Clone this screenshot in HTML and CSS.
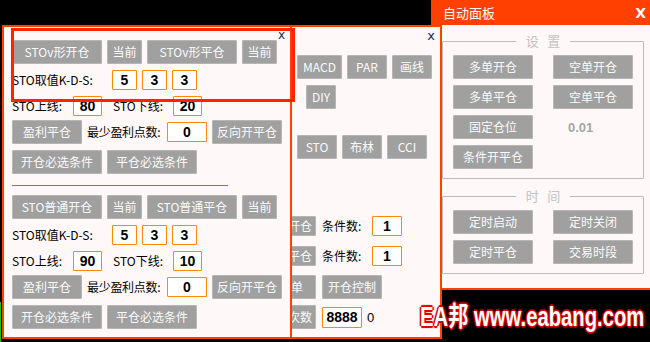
FILE: index.html
```html
<!DOCTYPE html>
<html lang="zh">
<head>
    <meta charset="utf-8">
    <title>自动面板</title>
    <link rel="stylesheet" href="styles.css">
</head>
<body>
<div class="desk">
    <div class="green-line"></div>

    <!-- right: auto panel -->
    <div class="win auto-win">
        <div class="title-bar">
            <span class="title">自动面板</span>
            <span class="title-close">X</span>
        </div>
        <div class="auto-body">
            <fieldset class="group">
                <legend>设&nbsp;&nbsp;&nbsp;置</legend>
                <div class="grid">
                    <button class="btn">多单开仓</button>
                    <button class="btn">空单开仓</button>
                    <button class="btn">多单平仓</button>
                    <button class="btn">空单平仓</button>
                    <button class="btn">固定仓位</button>
                    <span class="lots">0.01</span>
                    <button class="btn">条件开平仓</button>
                </div>
            </fieldset>
            <fieldset class="group group-time">
                <legend>时&nbsp;&nbsp;&nbsp;间</legend>
                <div class="grid">
                    <button class="btn">定时启动</button>
                    <button class="btn">定时关闭</button>
                    <button class="btn">定时平仓</button>
                    <button class="btn">交易时段</button>
                </div>
            </fieldset>
        </div>
    </div>

    <!-- middle: indicator panel -->
    <div class="win mid-win">
        <span class="close mid-close">x</span>
        <div class="mid-body">
            <div class="row ind-row row-a">
                <button class="btn w45">MACD</button>
                <button class="btn w40">PAR</button>
                <button class="btn w40">画线</button>
            </div>
            <div class="row ind-row row-b">
                <button class="btn w30">DIY</button>
            </div>
            <div class="row ind-row row-c">
                <button class="btn w40">STO</button>
                <button class="btn w40">布林</button>
                <button class="btn w40">CCI</button>
            </div>
            <div class="row cond-row row-d">
                <button class="btn w80 short">多单条件开仓</button>
                <span class="label">条件数:</span>
                <input class="num w30" value="1">
            </div>
            <div class="row cond-row row-e">
                <button class="btn w80 short">空单条件平仓</button>
                <span class="label">条件数:</span>
                <input class="num w30" value="1">
            </div>
            <div class="row cond-row row-f">
                <button class="btn w50">平单</button>
                <button class="btn w60">开仓控制</button>
            </div>
            <div class="row cond-row row-g">
                <button class="btn w80">最大开仓次数</button>
                <input class="num w40 tall" value="8888">
                <span class="count">0</span>
            </div>
        </div>
    </div>

    <!-- left: STO panel -->
    <div class="win sto-win">
        <span class="close sto-close">x</span>
        <div class="sto-body">
            <div class="section">
                <div class="row btn-row">
                    <button class="btn w90">STOv形开仓</button>
                    <button class="btn w35">当前</button>
                    <button class="btn w90">STOv形平仓</button>
                    <button class="btn w35">当前</button>
                </div>
                <div class="row field-row kds">
                    <span class="label lbl-kds">STO取值K-D-S:</span>
                    <input class="num w25" value="5">
                    <input class="num w25" value="3">
                    <input class="num w25" value="3">
                </div>
                <div class="row field-row lines">
                    <span class="label lbl-up">STO上线:</span>
                    <input class="num w29" value="80">
                    <span class="label lbl-down">STO下线:</span>
                    <input class="num w29" value="20">
                </div>
                <div class="row btn-row profit">
                    <button class="btn w70">盈利平仓</button>
                    <span class="label lbl-min">最少盈利点数:</span>
                    <input class="num w40" value="0">
                    <button class="btn w70">反向开平仓</button>
                </div>
                <div class="row btn-row must">
                    <button class="btn w90">开仓必选条件</button>
                    <button class="btn w90">平仓必选条件</button>
                </div>
            </div>

            <div class="divider"></div>

            <div class="section">
                <div class="row btn-row">
                    <button class="btn w90">STO普通开仓</button>
                    <button class="btn w35">当前</button>
                    <button class="btn w90">STO普通平仓</button>
                    <button class="btn w35">当前</button>
                </div>
                <div class="row field-row kds">
                    <span class="label lbl-kds">STO取值K-D-S:</span>
                    <input class="num w25" value="5">
                    <input class="num w25" value="3">
                    <input class="num w25" value="3">
                </div>
                <div class="row field-row lines">
                    <span class="label lbl-up">STO上线:</span>
                    <input class="num w29" value="90">
                    <span class="label lbl-down">STO下线:</span>
                    <input class="num w29" value="10">
                </div>
                <div class="row btn-row profit">
                    <button class="btn w70">盈利平仓</button>
                    <span class="label lbl-min">最少盈利点数:</span>
                    <input class="num w40" value="0">
                    <button class="btn w70">反向开平仓</button>
                </div>
                <div class="row btn-row must">
                    <button class="btn w90">开仓必选条件</button>
                    <button class="btn w90">平仓必选条件</button>
                </div>
            </div>
        </div>
        <div class="highlight"></div>
    </div>

    <div class="watermark">EA邦 www.eabang.com</div>
</div>
</body>
</html>
```

FILE: styles.css
```css
* {
    box-sizing: border-box;
}
body {
    margin: 0;
    background-color: #000;
    font-family: "Noto Sans CJK SC", "Noto Sans", sans-serif;
    font-size: 12px;
}
.desk {
    position: relative;
    width: 650px;
    height: 342px;
    overflow: hidden;
}
.green-line {
    position: absolute;
    left: 0;
    top: 302px;
    width: 1px;
    height: 40px;
    background-color: #22c022;
}

/* windows */
.win {
    position: absolute;
    background-color: #fff8f8;
}
.close {
    position: absolute;
    font-family: "DejaVu Sans", sans-serif;
    font-size: 12px;
    line-height: 12px;
    color: #14285a;
}

/* buttons and fields */
.btn {
    display: flex;
    align-items: center;
    justify-content: center;
    flex: none;
    height: 24px;
    padding: 0;
    background-color: #a0a0a0;
    border: 1px solid #b6b6b6;
    border-radius: 1px;
    color: #fbfbfb;
    font-family: "Noto Sans CJK SC", "Noto Sans", sans-serif;
    font-size: 12px;
    line-height: 1;
    white-space: nowrap;
    overflow: hidden;
}
.w25 { width: 25px; }
.w29 { width: 29px; }
.w30 { width: 30px; }
.w35 { width: 35px; }
.w40 { width: 40px; }
.w45 { width: 45px; }
.w50 { width: 50px; }
.w60 { width: 60px; }
.w70 { width: 70px; }
.w80 { width: 80px; }
.w90 { width: 90px; }
.num {
    flex: none;
    height: 20px;
    padding: 0;
    border: 1px solid #ff8a00;
    border-radius: 1px;
    background-color: #fff;
    color: #000;
    font-family: "Liberation Sans", Arial, sans-serif;
    font-size: 14px;
    font-weight: 900;
    text-align: center;
    outline: none;
}
.label {
    flex: none;
    color: #000;
    font-size: 12px;
    line-height: 1;
    white-space: nowrap;
}
.row {
    display: flex;
    align-items: center;
}

/* left STO panel */
.sto-win {
    left: 2px;
    top: 25px;
    width: 290px;
    height: 314px;
    border: 2px solid #ff4000;
    z-index: 3;
}
.sto-close {
    right: 5px;
    top: 2px;
}
.sto-body {
    padding: 13px 0 0 8px;
}
.section {
    display: flex;
    flex-direction: column;
}
.btn-row {
    gap: 5px;
    height: 24px;
}
.field-row {
    height: 20px;
}
.kds {
    margin-top: 6px;
    gap: 5px;
}
.lbl-kds {
    width: 95px;
}
.lines {
    margin-top: 6px;
}
.lbl-up {
    width: 61px;
}
.lbl-down {
    width: 60px;
    margin-left: 11px;
}
.profit {
    margin-top: 4px;
}
.lbl-min {
    width: 75px;
    letter-spacing: -0.3px;
}
.must {
    margin-top: 6px;
}
.divider {
    width: 216px;
    height: 1px;
    margin: 11px 0 9px;
    background-color: #7466e8;
}
.highlight {
    position: absolute;
    left: 7px;
    top: 1px;
    width: 284px;
    height: 74px;
    border: 3px solid #ff2400;
}

/* middle indicator panel */
.mid-win {
    left: 180px;
    top: 25px;
    width: 262px;
    height: 314px;
    border: 2px solid #ff4000;
    z-index: 2;
}
.mid-close {
    right: 5px;
    top: 3px;
    font-size: 13px;
}
.mid-body {
    display: flex;
    flex-direction: column;
    padding: 28px 0 0 54px;
}
.ind-row {
    gap: 5px;
    height: 24px;
    margin-left: 61px;
}
.row-b {
    margin-top: 6px;
    margin-left: 70px;
}
.row-c {
    margin-top: 26px;
}
.cond-row {
    gap: 6px;
}
.cond-row .label {
    width: 44px;
}
.short {
    height: 20px;
}
.row-d {
    height: 22px;
    margin-top: 56px;
}
.row-e {
    height: 22px;
    margin-top: 8px;
}
.row-f {
    height: 24px;
    margin-top: 8px;
    margin-left: 30px;
}
.row-g {
    height: 24px;
    margin-top: 6px;
}
.tall {
    height: 21px;
}
.count {
    margin-left: -1px;
    font-family: "Liberation Sans", Arial, sans-serif;
    font-size: 13px;
    color: #000;
}

/* right auto panel */
.auto-win {
    left: 431px;
    top: 0;
    width: 219px;
    height: 290px;
    border-bottom: 2px solid #ff4000;
    z-index: 1;
}
.title-bar {
    display: flex;
    justify-content: space-between;
    align-items: center;
    height: 25px;
    padding: 0 4px 0 12px;
    background-color: #ff4000;
    color: #fff;
}
.title {
    font-size: 13px;
    line-height: 1;
}
.title-close {
    font-family: "DejaVu Sans", sans-serif;
    font-size: 14px;
    font-weight: bold;
}
.auto-body {
    display: flex;
    flex-direction: column;
    padding: 9px 0 0 11px;
}
.group {
    width: 200px;
    margin: 0;
    padding: 7px 10px 9px;
    border: 1px solid #bababa;
    border-radius: 1px;
}
.group legend {
    margin: 0 auto;
    padding: 0 10px;
    color: #c2c2c2;
    font-size: 13px;
    line-height: 14px;
}
.group-time {
    margin-top: 10px;
}
.grid {
    display: grid;
    grid-template-columns: 80px 80px;
    column-gap: 20px;
    row-gap: 6px;
}
.lots {
    display: flex;
    align-items: center;
    padding-left: 15px;
    color: #a4a4a4;
    font-family: "Liberation Sans", Arial, sans-serif;
    font-size: 13px;
    font-weight: bold;
}

/* watermark */
.watermark {
    position: absolute;
    left: 420px;
    top: 302px;
    z-index: 5;
    color: #fff;
    font-family: "Liberation Sans", "Noto Sans CJK SC", sans-serif;
    font-size: 27px;
    font-weight: bold;
    line-height: 31px;
    white-space: nowrap;
    transform: scaleX(0.75);
    transform-origin: left center;
    text-shadow: 1px 0 0 #e00000, -1px 0 0 #e00000, 0 1px 0 #e00000, 0 -1px 0 #e00000,
        2px 0 1px #c00000, -2px 0 1px #c00000, 0 2px 1px #c00000, 0 -2px 1px #c00000;
}
```
